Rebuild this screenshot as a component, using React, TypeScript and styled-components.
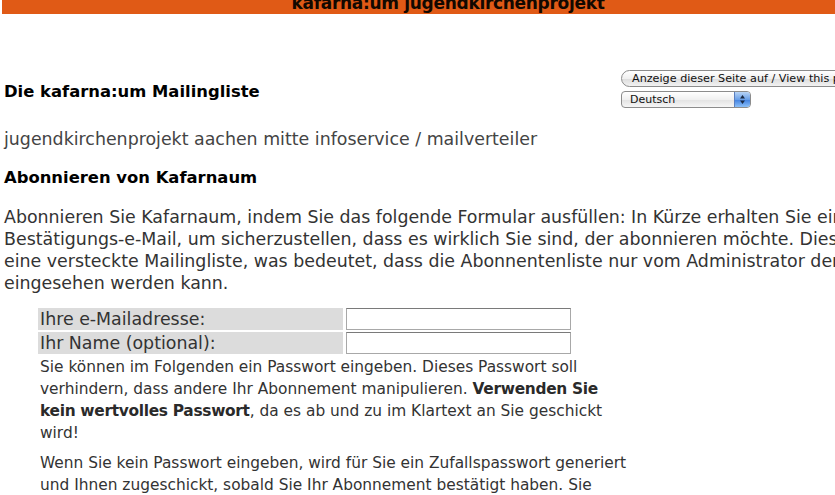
import styled, { createGlobalStyle } from 'styled-components';

const GlobalStyle = createGlobalStyle`
  html, body {
    margin: 0;
    padding: 0;
    background: #ffffff;
    overflow: hidden;
  }
  body {
    font-family: "DejaVu Sans", "Liberation Sans", sans-serif;
    color: #3a3a3a;
  }
`;

const Page = styled.div`
  width: 892px;
  padding-left: 2px;
`;

const HeaderBar = styled.div`
  height: 14px;
  background: #e05a16;
  overflow: hidden;
  text-align: center;
`;

const HeaderTitle = styled.div`
  margin-top: -8px;
  font-size: 17px;
  line-height: 22px;
  font-weight: bold;
  color: #120800;
  letter-spacing: -0.3px;
`;

const Content = styled.div`
  padding-left: 2px;
`;

const TopRow = styled.div`
  display: flex;
  justify-content: space-between;
  align-items: flex-start;
  padding-top: 56px;
`;

const ListTitle = styled.h1`
  margin: 12px 0 0;
  font-size: 16.4px;
  line-height: 20px;
  font-weight: bold;
  color: #000;
`;

const LangForm = styled.form`
  display: flex;
  flex-direction: column;
  gap: 4px;
  width: 273px;
  margin: 0;
`;

const LangButton = styled.button`
  height: 17px;
  width: 100%;
  padding: 0 10px;
  text-align: left;
  white-space: nowrap;
  overflow: hidden;
  border: 1px solid #8c8c8c;
  border-radius: 9px;
  background: linear-gradient(#ffffff, #f0f0f0 50%, #dcdcdc 51%, #f2f2f2);
  font-family: "DejaVu Sans", sans-serif;
  font-size: 11.2px;
  line-height: 15px;
  color: #111;
`;

const SelectBox = styled.div`
  display: flex;
  align-items: stretch;
  width: 130px;
  height: 17px;
  box-sizing: border-box;
  border: 1px solid #8c8c8c;
  border-radius: 4px;
  overflow: hidden;
  background: linear-gradient(#ffffff, #f0f0f0 50%, #e2e2e2 51%, #f6f6f6);
`;

const SelectLabel = styled.span`
  flex: 1;
  padding-left: 8px;
  font-size: 11px;
  line-height: 15px;
  color: #111;
`;

const Stepper = styled.span`
  width: 15px;
  border-left: 1px solid #5a7fc0;
  background: linear-gradient(#b8d4f6, #6aa0e8 50%, #3f7fe0 51%, #8cc0f8);
  display: flex;
  align-items: center;
  justify-content: center;
`;

const Intro = styled.p`
  margin: 20px 0 0;
  font-size: 17.4px;
  line-height: 22px;
  color: #444;
`;

const SectionTitle = styled.h2`
  margin: 17px 0 0;
  font-size: 16.4px;
  line-height: 22px;
  font-weight: bold;
  color: #000;
`;

const Paragraph = styled.p`
  margin: 17px 0 0;
  font-size: 17.4px;
  line-height: 22px;
  color: #333;
  white-space: nowrap;
`;

const FormTable = styled.div`
  margin: 14px 0 0 34px;
  width: 592px;
  display: grid;
  grid-template-columns: 305px 225px;
  column-gap: 3px;
  row-gap: 2px;
  align-items: stretch;
`;

const FieldLabel = styled.label`
  background: #dcdcdc;
  padding-left: 2px;
  font-size: 17.4px;
  line-height: 22px;
  color: #333;
  white-space: nowrap;
`;

const TextInput = styled.input`
  box-sizing: border-box;
  height: 22px;
  margin: 0;
  border: 1px solid #a8a8a8;
  border-top-color: #7a7a7a;
  background: #fff;
`;

const Note = styled.p<{ $gap?: number }>`
  grid-column: 1 / -1;
  margin: ${(p) => p.$gap ?? 0}px 0 0;
  padding-left: 2px;
  font-size: 15.4px;
  line-height: 22px;
  color: #333;
  white-space: nowrap;

  strong {
    color: #2a2a2a;
    letter-spacing: -0.3px;
  }
`;

const StepperIcon = () => (
  <svg width="7" height="11" viewBox="0 0 7 11">
    <path d="M3.5 1 L6 4.5 H1 Z" fill="#1a2a44" />
    <path d="M3.5 10 L6 6.5 H1 Z" fill="#1a2a44" />
  </svg>
);

export default function App() {
  return (
    <Page>
      <GlobalStyle />
      <HeaderBar>
        <HeaderTitle>kafarna:um jugendkirchenprojekt</HeaderTitle>
      </HeaderBar>
      <Content>
        <TopRow>
          <ListTitle>Die kafarna:um Mailingliste</ListTitle>
          <LangForm>
            <LangButton type="button">Anzeige dieser Seite auf / View this page in</LangButton>
            <SelectBox>
              <SelectLabel>Deutsch</SelectLabel>
              <Stepper>
                <StepperIcon />
              </Stepper>
            </SelectBox>
          </LangForm>
        </TopRow>
        <Intro>jugendkirchenprojekt aachen mitte infoservice / mailverteiler</Intro>
        <SectionTitle>Abonnieren von Kafarnaum</SectionTitle>
        <Paragraph>
          Abonnieren Sie Kafarnaum, indem Sie das folgende Formular ausfüllen: In Kürze erhalten Sie eine
          <br />
          Bestätigungs-e-Mail, um sicherzustellen, dass es wirklich Sie sind, der abonnieren möchte. Dies ist
          <br />
          eine versteckte Mailingliste, was bedeutet, dass die Abonnentenliste nur vom Administrator der Liste
          <br />
          eingesehen werden kann.
        </Paragraph>
        <FormTable>
          <FieldLabel htmlFor="email">Ihre e-Mailadresse:</FieldLabel>
          <TextInput id="email" type="text" />
          <FieldLabel htmlFor="fullname">Ihr Name (optional):</FieldLabel>
          <TextInput id="fullname" type="text" />
          <Note>
            Sie können im Folgenden ein Passwort eingeben. Dieses Passwort soll
            <br />
            verhindern, dass andere Ihr Abonnement manipulieren. <strong>Verwenden Sie</strong>
            <br />
            <strong>kein wertvolles Passwort</strong>, da es ab und zu im Klartext an Sie geschickt
            <br />
            wird!
          </Note>
          <Note $gap={6}>
            Wenn Sie kein Passwort eingeben, wird für Sie ein Zufallspasswort generiert
            <br />
            und Ihnen zugeschickt, sobald Sie Ihr Abonnement bestätigt haben. Sie
            <br />
            können sich Ihr Passwort jederzeit per E-mail zuschicken lassen, wenn Sie
            <br />
            weiter unten die Seite zum Ändern Ihrer persönlichen Optionen aufrufen.
          </Note>
        </FormTable>
      </Content>
    </Page>
  );
}
